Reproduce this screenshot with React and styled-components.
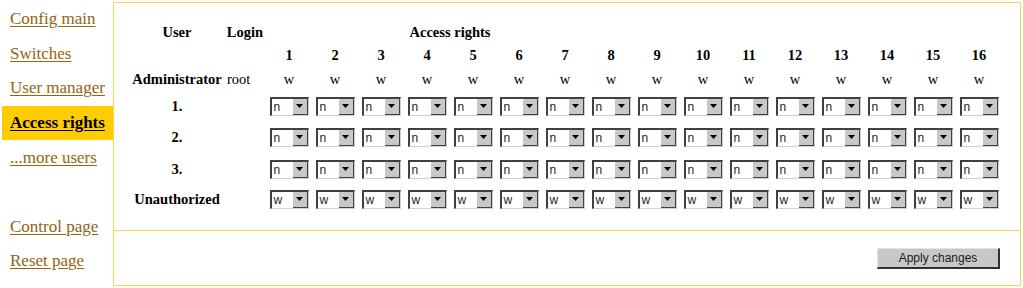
import React from 'react';
import styled, { createGlobalStyle } from 'styled-components';

const GlobalStyle = createGlobalStyle`
  html, body {
    margin: 0;
    padding: 0;
    background: #ffffff;
    font-family: "Liberation Serif", "Times New Roman", serif;
  }
`;

const Page = styled.div`
  display: flex;
  align-items: flex-start;
  padding-top: 2px;
  width: 1023px;
  height: 288px;
  box-sizing: border-box;
`;

const Nav = styled.nav`
  width: 111px;
  margin-left: 2px;
  display: flex;
  flex-direction: column;
`;

const NavItem = styled.div`
  height: 34.6px;
  display: flex;
  align-items: center;
  padding-left: 8px;
  background: ${(p) => (p.$active ? '#ffcc00' : 'transparent')};
`;

const NavSpacer = styled.div`
  height: 34.6px;
`;

const NavLink = styled.a`
  font-size: 17px;
  font-weight: ${(p) => (p.$active ? 'bold' : 'normal')};
  color: ${(p) => (p.$active ? '#000000' : '#946410')};
  text-decoration: underline;
  text-underline-offset: 2px;
  cursor: pointer;
  white-space: nowrap;
`;

const Panel = styled.div`
  width: 908px;
  height: 284px;
  box-sizing: border-box;
  border: 1px solid #ffd54f;
  display: flex;
  flex-direction: column;
`;

const TableArea = styled.div`
  height: 228px;
  padding: 17px 0 0 16px;
  box-sizing: border-box;
  border-bottom: 1px solid #ffd54f;
`;

const Grid = styled.table`
  table-layout: fixed;
  border-collapse: collapse;
  border-spacing: 0;
  font-size: 14.5px;
  color: #000;
`;

const Row = styled.tr`
  height: ${(p) => p.$h}px;
`;

const Head = styled.th`
  padding: 0;
  font-weight: bold;
  text-align: center;
  vertical-align: middle;
  white-space: nowrap;
`;

const Cell = styled.td`
  padding: 0 0 0 ${(p) => (p.$align === 'left' ? 3 : 0)}px;
  text-align: ${(p) => p.$align || 'center'};
  vertical-align: middle;
  white-space: nowrap;
`;

const SelectBox = styled.div`
  display: inline-flex;
  align-items: stretch;
  width: 39px;
  height: 19px;
  box-sizing: border-box;
  border-top: 2px solid #404040;
  border-left: 2px solid #404040;
  border-right: 1px solid #d4d0c8;
  border-bottom: 1px solid #d4d0c8;
  background: #ffffff;
  vertical-align: middle;
`;

const SelectValue = styled.span`
  flex: 1;
  font-family: "Liberation Sans", Arial, sans-serif;
  font-size: 12px;
  line-height: 16px;
  padding-left: 2px;
  text-align: left;
  color: #222;
`;

const SelectArrow = styled.span`
  width: 15px;
  background: #c8c8c8;
  border-right: 1px solid #404040;
  border-bottom: 1px solid #404040;
  box-sizing: border-box;
  display: flex;
  align-items: center;
  justify-content: center;
`;

const Footer = styled.div`
  flex: 1;
  display: flex;
  align-items: center;
  justify-content: flex-end;
  padding-right: 20px;
`;

const ApplyButton = styled.button`
  width: 123px;
  height: 21px;
  padding: 0;
  background: #c8c8c8;
  border-top: 1px solid #e4e4e4;
  border-left: 1px solid #e4e4e4;
  border-right: 2px solid #303030;
  border-bottom: 2px solid #303030;
  font-family: "Liberation Sans", Arial, sans-serif;
  font-size: 12px;
  color: #1a1a1a;
  cursor: pointer;
`;

const ports = Array.from({ length: 16 }, (_, i) => i + 1);

function Select({ value }) {
  return (
    <SelectBox>
      <SelectValue>{value}</SelectValue>
      <SelectArrow>
        <svg width="7" height="4" viewBox="0 0 7 4">
          <path d="M0 0 H7 L3.5 4 Z" fill="#000" />
        </svg>
      </SelectArrow>
    </SelectBox>
  );
}

const navTop = ['Config main', 'Switches', 'User manager', 'Access rights', '...more users'];
const navBottom = ['Control page', 'Reset page'];

const users = [
  { label: '1.', value: 'n' },
  { label: '2.', value: 'n' },
  { label: '3.', value: 'n' },
  { label: 'Unauthorized', value: 'w' },
];

export default function App() {
  return (
    <>
      <GlobalStyle />
      <Page>
        <Nav>
          {navTop.map((t) => (
            <NavItem key={t} $active={t === 'Access rights'}>
              <NavLink $active={t === 'Access rights'}>{t}</NavLink>
            </NavItem>
          ))}
          <NavSpacer />
          {navBottom.map((t) => (
            <NavItem key={t}>
              <NavLink>{t}</NavLink>
            </NavItem>
          ))}
        </Nav>
        <Panel>
          <TableArea>
            <Grid>
              <colgroup>
                <col style={{ width: 94 }} />
                <col style={{ width: 42 }} />
                {ports.map((p) => (
                  <col key={p} style={{ width: 46 }} />
                ))}
              </colgroup>
              <tbody>
                <Row $h={24}>
                  <Head>User</Head>
                  <Head>Login</Head>
                  <Head colSpan={8}>Access rights</Head>
                  <Cell colSpan={8} />
                </Row>
                <Row $h={23}>
                  <Cell />
                  <Cell />
                  {ports.map((p) => (
                    <Head key={p}>{p}</Head>
                  ))}
                </Row>
                <Row $h={24}>
                  <Head>Administrator</Head>
                  <Cell $align="left">root</Cell>
                  {ports.map((p) => (
                    <Cell key={p}>w</Cell>
                  ))}
                </Row>
                {users.map((u, i) => (
                  <Row key={u.label} $h={i === 0 ? 30 : i === 3 ? 28 : 32}>
                    <Head>{u.label}</Head>
                    <Cell />
                    {ports.map((p) => (
                      <Cell key={p}>
                        <Select value={u.value} />
                      </Cell>
                    ))}
                  </Row>
                ))}
              </tbody>
            </Grid>
          </TableArea>
          <Footer>
            <ApplyButton>Apply changes</ApplyButton>
          </Footer>
        </Panel>
      </Page>
    </>
  );
}
